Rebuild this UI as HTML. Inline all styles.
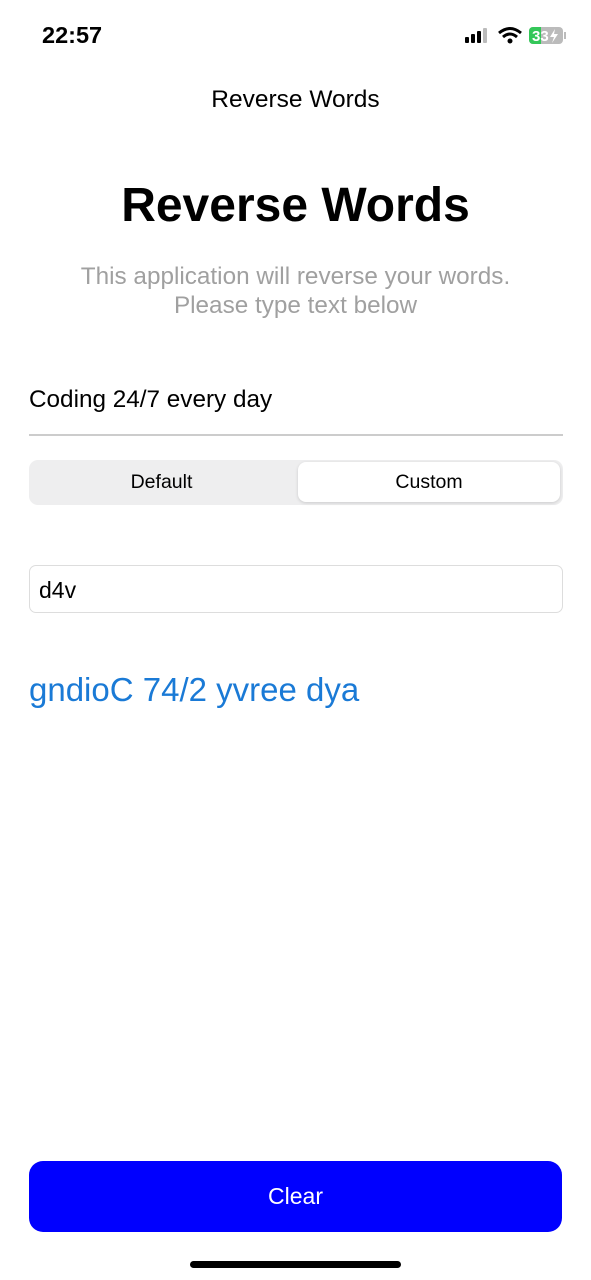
<!DOCTYPE html>
<html><head><meta charset="utf-8"><style>
body{margin:0;width:591px;height:1280px;background:#fff;font-family:"Liberation Sans",sans-serif;position:relative;overflow:hidden}
.a{position:absolute}
</style></head><body>
<div class="a" style="left:42px;top:22px;font-size:23.5px;font-weight:bold;color:#000">22:57</div>
<svg class="a" style="left:465px;top:26px" width="110" height="20">
<rect x="0" y="11" width="4" height="6" rx="1" fill="#000"/>
<rect x="6" y="8" width="4" height="9" rx="1" fill="#000"/>
<rect x="12" y="5" width="4" height="12" rx="1" fill="#000"/>
<rect x="18" y="2" width="4" height="15" rx="1" fill="#bbb"/>
<path d="M34 7 Q45 -2 56 7" stroke="#000" stroke-width="3" fill="none"/>
<path d="M38 11 Q45 5 52 11" stroke="#000" stroke-width="3" fill="none"/>
<circle cx="45" cy="15" r="2.5" fill="#000"/>
<rect x="64" y="1" width="34" height="17" rx="4" fill="#bbb"/>
<rect x="64" y="1" width="12" height="17" rx="4" fill="#34c759"/>
<rect x="70" y="1" width="6" height="17" fill="#34c759"/>
<rect x="99" y="6" width="2" height="7" fill="#bbb"/>
<text x="67" y="15" font-size="15" font-weight="bold" fill="#fff" font-family="Liberation Sans">33</text>
<path d="M90 3 L85 11 H89 L87 17 L93 8 H89 Z" fill="#fff"/>
</svg>
<div class="a" style="left:0;width:591px;top:86px;text-align:center;font-size:24.5px;color:#000">Reverse Words</div>
<div class="a" style="left:0;width:591px;top:178px;text-align:center;font-size:48px;font-weight:bold;color:#000">Reverse Words</div>
<div class="a" style="left:0;width:591px;top:262px;text-align:center;font-size:24.3px;line-height:29px;color:#a0a0a0">This application will reverse your words.<br>Please type text below</div>
<div class="a" style="left:29px;top:386px;font-size:24.3px;color:#000">Coding 24/7 every day</div>
<div class="a" style="left:29px;top:434px;width:534px;height:2px;background:#ccc"></div>
<div class="a" style="left:29px;top:460px;width:534px;height:45px;border-radius:9px;background:#eeeeef"></div>
<div class="a" style="left:298px;top:462px;width:262px;height:40px;border-radius:8px;background:#fff;box-shadow:0 1px 3px rgba(0,0,0,.15)"></div>
<div class="a" style="left:29px;width:265px;top:471px;text-align:center;font-size:19.5px">Default</div>
<div class="a" style="left:298px;width:262px;top:471px;text-align:center;font-size:19.5px">Custom</div>
<div class="a" style="left:29px;top:565px;width:532px;height:46px;border:1px solid #ddd;border-radius:7px"></div>
<div class="a" style="left:39px;top:577px;font-size:23px">d4v</div>
<div class="a" style="left:29px;top:671px;font-size:33px;color:#1a7ad6">gndioC 74/2 yvree dya</div>
<div class="a" style="left:29px;top:1161px;width:533px;height:71px;border-radius:14px;background:#0000ff;color:#fff;font-size:23px;text-align:center;line-height:71px">Clear</div>
<div class="a" style="left:190px;top:1261px;width:211px;height:7px;border-radius:4px;background:#000"></div>
</body></html>
